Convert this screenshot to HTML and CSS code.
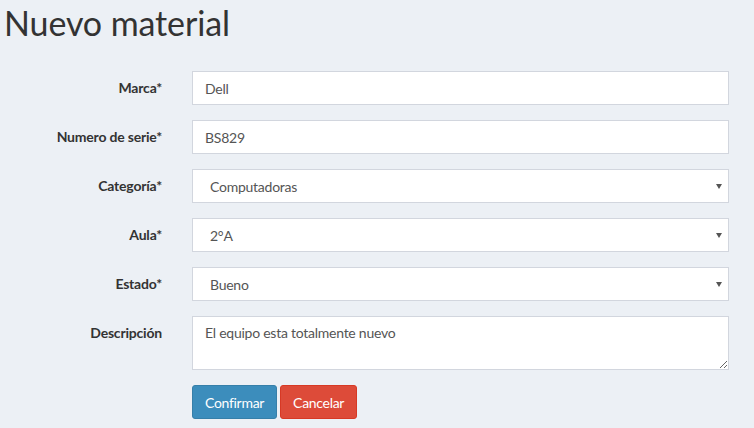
FILE: index.html
```html
<!DOCTYPE html>
<html lang="es">
<head>
<meta charset="utf-8">
<title>Nuevo material</title>
<link rel="stylesheet" href="styles.css">
</head>
<body>
<div class="page">
  <h1 class="title">Nuevo material</h1>
  <form class="form">
    <label class="label" for="marca">Marca*</label>
    <input class="control" id="marca" type="text" value="Dell">

    <label class="label" for="serie">Numero de serie*</label>
    <input class="control" id="serie" type="text" value="BS829">

    <label class="label" for="cat">Categoría*</label>
    <div class="select-wrap">
      <select class="control select" id="cat"><option>Computadoras</option></select>
    </div>

    <label class="label" for="aula">Aula*</label>
    <div class="select-wrap">
      <select class="control select" id="aula"><option>2°A</option></select>
    </div>

    <label class="label" for="estado">Estado*</label>
    <div class="select-wrap">
      <select class="control select" id="estado"><option>Bueno</option></select>
    </div>

    <label class="label" for="desc">Descripción</label>
    <textarea class="control area" id="desc" rows="2">El equipo esta totalmente nuevo</textarea>

    <div class="spacer"></div>
    <div class="actions">
      <button type="button" class="btn btn-primary">Confirmar</button>
      <button type="button" class="btn btn-danger">Cancelar</button>
    </div>
  </form>
</div>
</body>
</html>
```
FILE: styles.css
```css
html, body {
  margin: 0;
  padding: 0;
  background: #ecf0f5;
}
body {
  font-family: Lato, "Open Sans", sans-serif;
  font-size: 14px;
  color: #333;
  width: 754px;
  height: 428px;
  overflow: hidden;
}
.page {
  padding: 0 0 0 4px;
}
.title {
  margin: 0;
  padding-top: 3px;
  font-size: 34px;
  font-weight: 400;
  line-height: 40px;
  color: #333;
  letter-spacing: -0.1px;
}
.form {
  display: grid;
  grid-template-columns: 158px 537px;
  column-gap: 30px;
  row-gap: 15px;
  margin-top: 28px;
}
.label {
  justify-self: end;
  font-weight: 700;
  padding-top: 8px;
  line-height: 18px;
  letter-spacing: -0.2px;
}
.control {
  box-sizing: border-box;
  width: 537px;
  height: 34px;
  margin: 0;
  padding: 6px 12px;
  border: 1px solid #d2d6de;
  border-radius: 0;
  background: #fff;
  font-family: inherit;
  font-size: 14px;
  color: #555;
  outline: none;
  letter-spacing: -0.25px;
}
.select-wrap {
  position: relative;
}
.select {
  appearance: none;
  -webkit-appearance: none;
  padding-left: 17px;
}
.select-wrap::after {
  content: "";
  position: absolute;
  right: 7px;
  top: 15px;
  border-left: 3px solid transparent;
  border-right: 3px solid transparent;
  border-top: 5px solid #555;
  pointer-events: none;
}
.area {
  height: 54px;
  resize: vertical;
  line-height: 20px;
}
.actions {
  display: flex;
  gap: 3px;
}
.btn {
  height: 34px;
  padding: 6px 12px;
  border: 1px solid transparent;
  border-radius: 3px;
  font-family: inherit;
  font-size: 14px;
  color: #fff;
  cursor: pointer;
  letter-spacing: -0.3px;
}
.btn-primary {
  background: #3c8dbc;
  border-color: #367fa9;
}
.btn-danger {
  background: #dd4b39;
  border-color: #d73925;
}
```
